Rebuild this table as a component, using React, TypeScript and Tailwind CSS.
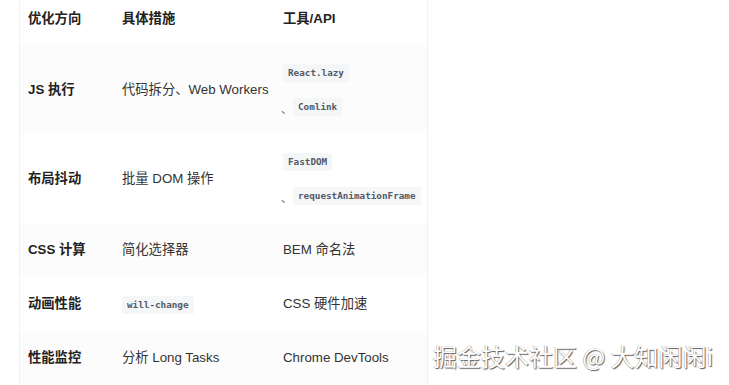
const rows: { dir: string; measure: React.ReactNode; tools: React.ReactNode; tall?: boolean }[] = [
  {
    dir: "JS 执行",
    measure: "代码拆分、Web Workers",
    tools: (
      <>
        <div className="h-[34px] flex items-center">
          <Code>React.lazy</Code>
        </div>
        <div className="h-[34px] flex items-center">
          <Dun />
          <Code>Comlink</Code>
        </div>
      </>
    ),
    tall: true,
  },
  {
    dir: "布局抖动",
    measure: "批量 DOM 操作",
    tools: (
      <>
        <div className="h-[34px] flex items-center">
          <Code>FastDOM</Code>
        </div>
        <div className="h-[34px] flex items-center">
          <Dun />
          <Code>requestAnimationFrame</Code>
        </div>
      </>
    ),
    tall: true,
  },
  { dir: "CSS 计算", measure: "简化选择器", tools: "BEM 命名法" },
  { dir: "动画性能", measure: <Code>will-change</Code>, tools: "CSS 硬件加速" },
  { dir: "性能监控", measure: "分析 Long Tasks", tools: "Chrome DevTools" },
];

function Dun() {
  return <span className="-ml-[2px] mr-[1px] mt-[6px] text-[11px] text-[#555]">、</span>;
}

function Code({ children }: { children: React.ReactNode }) {
  return (
    <code className="inline-block rounded-[2px] bg-[#f5f6f7] px-[5px] py-[3px] font-['DejaVu_Sans_Mono',monospace] text-[9.3px] font-bold leading-[12px] text-[#525a6a]">
      {children}
    </code>
  );
}

export default function App() {
  return (
    <div className="relative h-[385px] w-[729px] overflow-hidden bg-white font-['Liberation_Sans','Noto_Sans_CJK_SC',sans-serif] text-[13.3px] text-[#333]">
      <div className="-mt-[8px] ml-[19px] w-[409px] border-x border-[#f2f2f2]">
        <div className="grid h-[53px] grid-cols-[94px_161px_1fr] items-center font-bold text-[#222]">
          <div className="pl-[8px]">优化方向</div>
          <div className="pl-[8px]">具体措施</div>
          <div className="pl-[8px]">工具/API</div>
        </div>
        {rows.map((r, i) => (
          <div
            key={r.dir}
            className={`grid grid-cols-[94px_161px_1fr] items-center whitespace-nowrap ${r.tall ? "h-[89px]" : "h-[54px]"} ${i % 2 === 0 ? "bg-[#fcfcfc]" : "bg-white"}`}
          >
            <div className="pl-[8px] font-bold text-[#222]">{r.dir}</div>
            <div className="pl-[8px]">{r.measure}</div>
            <div className="pl-[8px]">{r.tools}</div>
          </div>
        ))}
      </div>
      <div className="absolute left-[433px] top-[341px] whitespace-nowrap font-['Noto_Sans_CJK_SC',sans-serif] text-[24px] leading-[30px] text-white [text-shadow:1px_1px_1px_#5e5e5e,-0.5px_-0.5px_0_#a0a0a0]">
        掘金技术社区 @ 大知闲闲i
      </div>
    </div>
  );
}
